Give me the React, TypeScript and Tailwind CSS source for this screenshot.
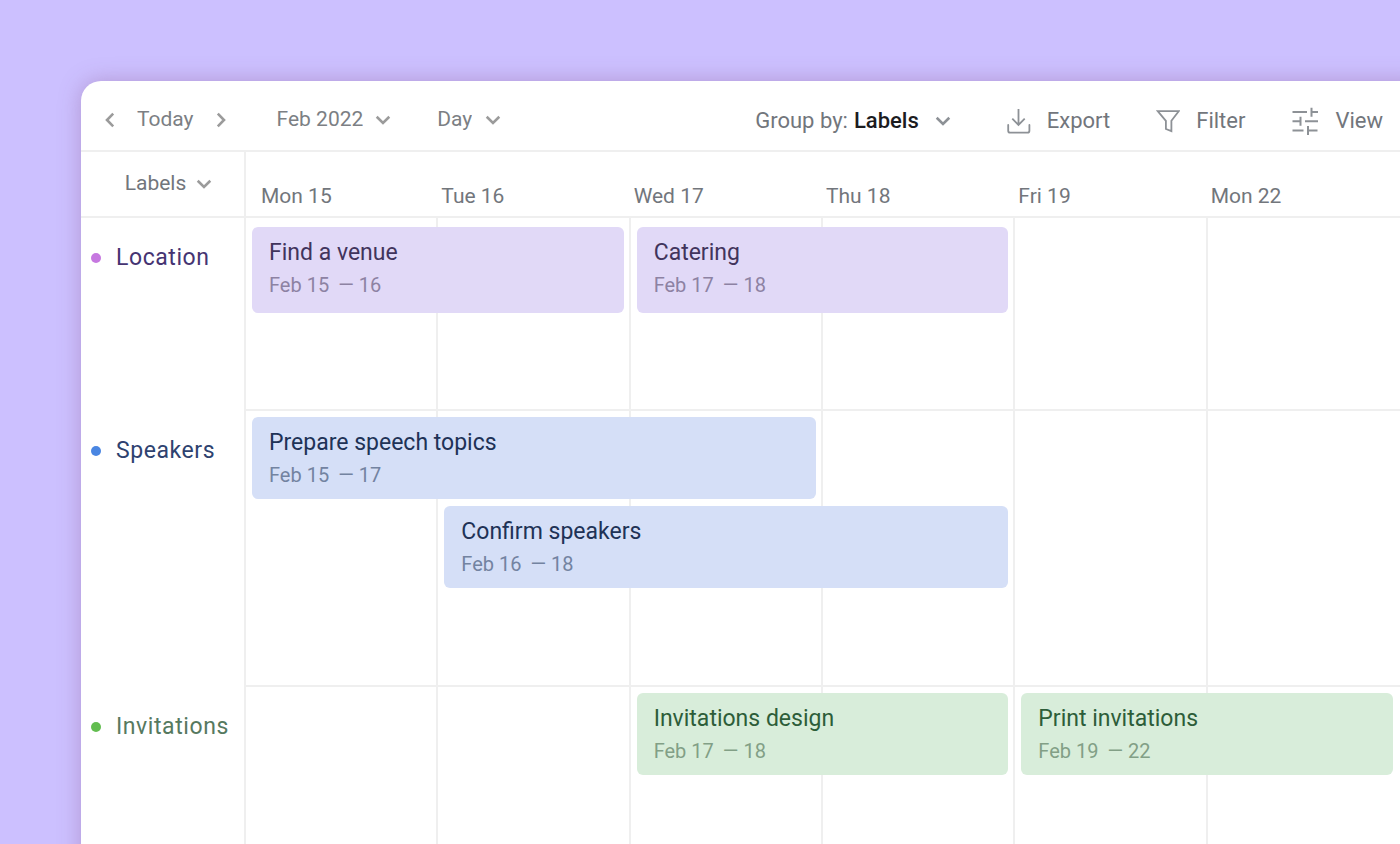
import { useState } from 'react';
import type { ReactNode } from 'react';

interface Task {
  title: string;
  from: string;
  to: string;
  place: string;
}

interface Group {
  name: string;
  dot: string;
  label: string;
  track: string;
  card: string;
  date: string;
  tasks: Task[];
}

const days = ['Mon 15', 'Tue 16', 'Wed 17', 'Thu 18', 'Fri 19', 'Mon 22'];

const groups: Group[] = [
  {
    name: 'Location',
    dot: 'bg-[#c678e0]',
    label: 'text-[#453472]',
    track: 'h-[191px] pt-[9px] auto-rows-[86px]',
    card: 'bg-[#e1d9f7] text-[#41345c]',
    date: 'text-[#8d82a3]',
    tasks: [
      { title: 'Find a venue', from: 'Feb 15', to: '16', place: 'row-start-1 col-start-1 col-span-2' },
      { title: 'Catering', from: 'Feb 17', to: '18', place: 'row-start-1 col-start-3 col-span-2' },
    ],
  },
  {
    name: 'Speakers',
    dot: 'bg-[#4a86e2]',
    label: 'text-[#2e426f]',
    track: 'h-[274px] pt-1.5 auto-rows-[82px]',
    card: 'bg-[#d5dff7] text-[#203256]',
    date: 'text-[#7383a1]',
    tasks: [
      { title: 'Prepare speech topics', from: 'Feb 15', to: '17', place: 'row-start-1 col-start-1 col-span-3' },
      { title: 'Confirm speakers', from: 'Feb 16', to: '18', place: 'row-start-2 col-start-2 col-span-3' },
    ],
  },
  {
    name: 'Invitations',
    dot: 'bg-[#62bd50]',
    label: 'text-[#56795f]',
    track: 'h-[274px] pt-1.5 auto-rows-[82px]',
    card: 'bg-[#d8edda] text-[#2d5d39]',
    date: 'text-[#829f86]',
    tasks: [
      { title: 'Invitations design', from: 'Feb 17', to: '18', place: 'row-start-1 col-start-3 col-span-2' },
      { title: 'Print invitations', from: 'Feb 19', to: '22', place: 'row-start-1 col-start-5 col-span-2' },
    ],
  },
];

function Chevron({ className }: { className: string }) {
  return (
    <svg viewBox="0 0 16 10" className={`w-4 h-2.5 fill-none ${className}`}>
      <path d="M1.700 1.800l6.300 6.200 6.300-6.200" stroke="currentColor" strokeWidth="2.6" />
    </svg>
  );
}

interface DropdownProps {
  name: string;
  options: string[];
  className: string;
  chevron?: string;
}

function Dropdown({ name, options, className, chevron = 'text-[#9b9b9b]' }: DropdownProps) {
  const [value, setValue] = useState(options[0]);

  return (
    <span className="grid items-center">
      <select
        aria-label={name}
        value={value}
        onChange={(e) => setValue(e.target.value)}
        className={`col-start-1 row-start-1 appearance-none field-sizing-content bg-transparent cursor-pointer ${className}`}
      >
        {options.map((option) => (
          <option key={option}>{option}</option>
        ))}
      </select>
      <Chevron className={`col-start-1 row-start-1 justify-self-end pointer-events-none ${chevron}`} />
    </span>
  );
}

function ToolButton({ icon, children }: { icon: ReactNode; children: ReactNode }) {
  return (
    <button type="button" className="flex items-center gap-4 cursor-pointer">
      {icon}
      {children}
    </button>
  );
}

function ExportIcon() {
  return (
    <svg viewBox="0 0 24 28" className="w-6 h-7 fill-none stroke-[#8d9196]" strokeWidth="1.8">
      <path d="M11.500 2v15.800M5.300 11.700l6.200 6.200 6.200-6.200" />
      <path d="M1.200 18v5.700a2 2 0 0 0 2 2h17.200a2 2 0 0 0 2-2V18" strokeLinecap="round" />
    </svg>
  );
}

function FilterIcon() {
  return (
    <svg viewBox="0 0 24 28" className="w-6 h-7 fill-none stroke-[#8d9196]" strokeWidth="1.8">
      <path d="M1.700 4.200h21l-7.300 9.600v10.400l-5.500-2.200v-8.200z" />
    </svg>
  );
}

function ViewIcon() {
  return (
    <svg viewBox="0 0 28 28" className="w-7 h-7 fill-none stroke-[#8d9196]" strokeWidth="2">
      <path d="M1.500 5h14.500M20.500 5H27M20.500 0.700v9" />
      <path d="M1.500 14.200h8M9.500 9.700v9M14 14.200h13" />
      <path d="M1.500 23.400h11M17 23.400h9.500M17 18.900v9" />
    </svg>
  );
}

function Toolbar() {
  return (
    <header className="flex justify-between h-[71px] border-b-2 border-[#efefef] pl-[21px] pr-[17px] whitespace-nowrap">
      <div className="flex items-center pt-2 text-[21px] text-[#7c7f84]">
        <button type="button" aria-label="Previous" className="cursor-pointer">
          <Chevron className="rotate-90 text-[#9b9b9b]" />
        </button>
        <button type="button" className="mx-[19px] cursor-pointer">
          Today
        </button>
        <button type="button" aria-label="Next" className="mr-12 cursor-pointer">
          <Chevron className="-rotate-90 text-[#9b9b9b]" />
        </button>
        <div className="flex gap-[46px]">
          <Dropdown name="Month" options={['Feb 2022', 'Mar 2022', 'Apr 2022']} className="pr-7" />
          <Dropdown name="Scale" options={['Day', 'Week', 'Month']} className="pr-[29px]" />
        </div>
      </div>
      <div className="flex items-center gap-[46px] pt-2.5 text-[22px] text-[#72767c]">
        <div className="mr-2.5 flex items-center gap-1.5">
          <span>Group by:</span>
          <Dropdown
            name="Group by"
            options={['Labels', 'Assignee', 'Status']}
            className="pr-8 font-medium text-[#1c1c1f]"
            chevron="text-[#8d9196]"
          />
        </div>
        <ToolButton icon={<ExportIcon />}>Export</ToolButton>
        <ToolButton icon={<FilterIcon />}>Filter</ToolButton>
        <ToolButton icon={<ViewIcon />}>View</ToolButton>
      </div>
    </header>
  );
}

function TaskCard({ task, group }: { task: Task; group: Group }) {
  return (
    <article className={`z-10 ml-1.5 mr-[7px] rounded-md pl-[17px] pt-2.5 ${group.card} ${task.place}`}>
      <h3 className="text-[23px] leading-8">{task.title}</h3>
      <p className={`flex gap-[5px] text-[20px] leading-8 ${group.date}`}>
        <span className="mr-1">{task.from}</span>
        <span>—</span>
        <span>{task.to}</span>
      </p>
    </article>
  );
}

function GroupRow({ group, last }: { group: Group; last: boolean }) {
  return (
    <section className="flex">
      <div className="w-[165px] shrink-0 border-r-2 border-[#efefef] pl-2.5 pt-6">
        <h2 className={`flex items-center gap-[15px] text-[23px] leading-8 tracking-wide ${group.label}`}>
          <span className={`size-2.5 rounded-full ${group.dot}`} />
          {group.name}
        </h2>
      </div>
      <div className={`grid grow grid-cols-6 border-[#efefef] ${last ? '' : 'border-b-2'}`}>
        <div className="col-span-full col-start-1 row-start-1 grid grid-cols-6">
          {days.map((day) => (
            <div key={day} className="border-r-2 border-[#efefef] last:border-r-0" />
          ))}
        </div>
        <div className={`col-span-full col-start-1 row-start-1 grid grid-cols-6 gap-y-[7px] ${group.track}`}>
          {group.tasks.map((task) => (
            <TaskCard key={task.title} task={task} group={group} />
          ))}
        </div>
      </div>
    </section>
  );
}

export default function App() {
  return (
    <div className="h-screen overflow-hidden bg-[#ccc0ff] pl-[81px] pt-[81px] font-[Roboto,sans-serif]">
      {/* the panel runs on past the right edge of the window */}
      <main className="-mr-6 min-h-full rounded-tl-[20px] bg-white pr-6 shadow-[0_0_22px_rgba(130,75,125,0.35)]">
        <Toolbar />
        <div className="flex border-b-2 border-[#efefef] text-[#72767c]">
          <div className="flex h-16 w-[165px] shrink-0 items-center justify-center border-r-2 border-[#efefef] pl-3 text-[21px]">
            <Dropdown name="Rows" options={['Labels', 'Assignee']} className="pr-[26px]" />
          </div>
          <div className="grid grow grid-cols-6 items-end pb-1 text-[21px] leading-8">
            {days.map((day) => (
              <div key={day} className="pl-[3px] first:pl-[15px]">
                {day}
              </div>
            ))}
          </div>
        </div>
        {groups.map((group, i) => (
          <GroupRow key={group.name} group={group} last={i === groups.length - 1} />
        ))}
      </main>
    </div>
  );
}
